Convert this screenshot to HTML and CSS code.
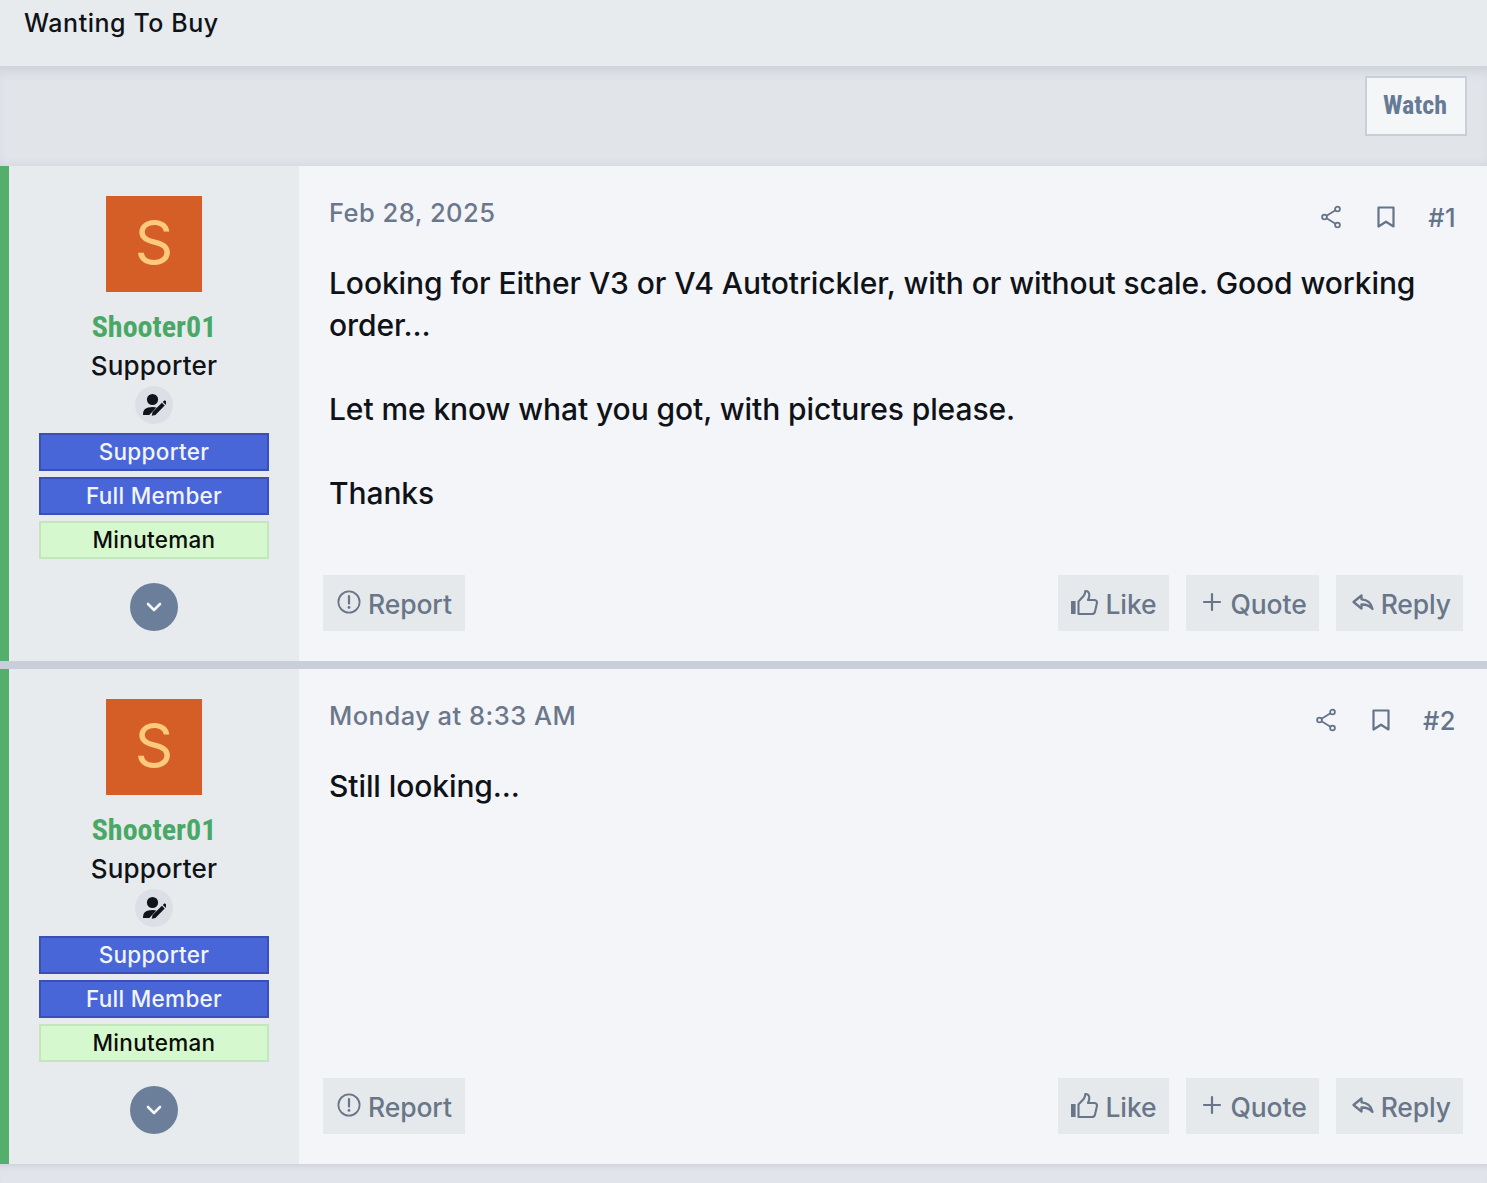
FILE: index.html
```html
<!DOCTYPE html>
<html lang="en">
<head>
<meta charset="utf-8">
<title>Wanting To Buy</title>
<link rel="stylesheet" href="styles.css">
</head>
<body>
<svg class="defs" width="0" height="0" aria-hidden="true">
  <symbol id="i-share" viewBox="0 0 24 24"><g fill="none" stroke="currentColor" stroke-width="1.800"><circle cx="18.500" cy="4" r="2.400"/><circle cx="5.500" cy="12" r="2.400"/><circle cx="18.500" cy="20" r="2.400"/><path d="M7.600 10.700 16.400 5.300M7.600 13.300l8.800 5.400"/></g></symbol>
  <symbol id="i-bookmark" viewBox="0 0 24 24"><path d="M4.500 2.500h15v19l-7.500-4.800-7.500 4.800z" fill="none" stroke="currentColor" stroke-width="2.200" stroke-linejoin="round"/></symbol>
  <symbol id="i-report" viewBox="0 0 24 24"><circle cx="12" cy="12" r="10.600" fill="none" stroke="currentColor" stroke-width="1.800"/><path d="M12 6v7.600" stroke="currentColor" stroke-width="2.200" stroke-linecap="round"/><circle cx="12" cy="17.400" r="1.400" fill="currentColor"/></symbol>
  <symbol id="i-like" viewBox="0 0 28 28"><path d="M1 12h4.600v13H1z" fill="currentColor"/><path d="M8.500 12.500 13.600 7c1-1.200 1.700-2.800 1.700-5 2.600 0 4 1.700 4 4.200 0 1.700-.6 3.300-1.300 4.800h6.300c1.800 0 3 1.500 2.600 3.200l-1.900 8.300c-.3 1.500-1.500 2.500-3 2.500H8.500z" fill="none" stroke="currentColor" stroke-width="2.100" stroke-linejoin="round"/></symbol>
  <symbol id="i-plus" viewBox="0 0 20 20"><path d="M10 2v16M2 10h16" stroke="currentColor" stroke-width="2.200" stroke-linecap="round"/></symbol>
  <symbol id="i-reply" viewBox="0 0 24 24"><path d="M10.500 4.500 2.500 11 10.500 17.500v-4c4.500-.2 8 1 11 4.500-1-5.500-4.500-9.300-11-9.700z" fill="none" stroke="currentColor" stroke-width="2.300" stroke-linejoin="round"/></symbol>
  <symbol id="i-chevron" viewBox="0 0 20 20"><path d="M4 7l6 6 6-6" fill="none" stroke="currentColor" stroke-width="2.600" stroke-linecap="round" stroke-linejoin="round"/></symbol>
  <symbol id="i-author" viewBox="0 0 24 24"><circle cx="10.500" cy="6.500" r="5.600" fill="currentColor"/><path d="M1 22c0-3 .6-5 2.500-6.200C5 14.800 7.500 14 10.500 14c1.500 0 2.800.2 3.900.5L7.300 22z" fill="currentColor"/><path d="M9.700 22.800l.9-3.700 9.300-9.300 2.800 2.800-9.300 9.300zM20.800 8.900l1.200-1.200c.4-.4 1-.4 1.400 0l1.400 1.400c.4.4.4 1 0 1.400l-1.200 1.200z" fill="currentColor"/></symbol>
</svg>

<header class="page-title">Wanting To Buy</header>

<div class="toolbar">
  <a class="watch"><span class="condensed">Watch</span></a>
</div>

<article class="post">
  <aside class="user">
    <div class="avatar">S</div>
    <div class="name"><span class="condensed">Shooter01</span></div>
    <div class="role">Supporter</div>
    <div class="author-badge"><svg class="icon-author"><use href="#i-author"/></svg></div>
    <div class="banner blue">Supporter</div>
    <div class="banner blue">Full Member</div>
    <div class="banner green">Minuteman</div>
    <div class="expand"><svg class="icon-chevron"><use href="#i-chevron"/></svg></div>
  </aside>
  <div class="main">
    <div class="meta">
      <time class="date">Feb 28, 2025</time>
      <div class="meta-actions">
        <svg class="icon-share"><use href="#i-share"/></svg>
        <svg class="icon-bookmark"><use href="#i-bookmark"/></svg>
        <span class="num">#1</span>
      </div>
    </div>
    <div class="body">Looking for Either V3 or V4 Autotrickler, with or without scale. Good working order...<br><br>Let me know what you got, with pictures please.<br><br>Thanks</div>
    <div class="actions">
      <a class="btn btn-report"><svg class="icon-report"><use href="#i-report"/></svg>Report</a>
      <span class="spacer"></span>
      <a class="btn btn-like"><svg class="icon-like"><use href="#i-like"/></svg>Like</a>
      <a class="btn btn-quote"><svg class="icon-plus"><use href="#i-plus"/></svg>Quote</a>
      <a class="btn btn-reply"><svg class="icon-reply"><use href="#i-reply"/></svg>Reply</a>
    </div>
  </div>
</article>

<div class="divider"></div>

<article class="post">
  <aside class="user">
    <div class="avatar">S</div>
    <div class="name"><span class="condensed">Shooter01</span></div>
    <div class="role">Supporter</div>
    <div class="author-badge"><svg class="icon-author"><use href="#i-author"/></svg></div>
    <div class="banner blue">Supporter</div>
    <div class="banner blue">Full Member</div>
    <div class="banner green">Minuteman</div>
    <div class="expand"><svg class="icon-chevron"><use href="#i-chevron"/></svg></div>
  </aside>
  <div class="main">
    <div class="meta">
      <time class="date">Monday at 8:33 AM</time>
      <div class="meta-actions">
        <svg class="icon-share"><use href="#i-share"/></svg>
        <svg class="icon-bookmark"><use href="#i-bookmark"/></svg>
        <span class="num">#2</span>
      </div>
    </div>
    <div class="body">Still looking...</div>
    <div class="actions">
      <a class="btn btn-report"><svg class="icon-report"><use href="#i-report"/></svg>Report</a>
      <span class="spacer"></span>
      <a class="btn btn-like"><svg class="icon-like"><use href="#i-like"/></svg>Like</a>
      <a class="btn btn-quote"><svg class="icon-plus"><use href="#i-plus"/></svg>Quote</a>
      <a class="btn btn-reply"><svg class="icon-reply"><use href="#i-reply"/></svg>Reply</a>
    </div>
  </div>
</article>
<div class="page-end"></div>
</body>
</html>
```
FILE: styles.css
```css
* { box-sizing: border-box; }
html, body { margin: 0; padding: 0; }
body {
  background: #e1e4e9;
  color: #0f1318;
  font-family: Inter, "Liberation Sans", sans-serif;
  overflow: hidden;
  height: 1183px;
}
.defs { position: absolute; }
.page-title {
  height: 66px;
  background: #e8ebee;
  padding: 7px 24px 0;
  font-size: 25px;
  line-height: 32px;
  font-weight: 500;
  letter-spacing: .55px;
}
.toolbar {
  height: 100px;
  padding: 10px 20px 0 0;
  display: flex;
  justify-content: flex-end;
  align-items: flex-start;
  background: #e1e4e9;
  box-shadow: inset 0 10px 12px -6px rgba(100, 110, 130, .18), inset 0 -8px 10px -8px rgba(100, 110, 130, .12);
}
.condensed {
  font-family: "Roboto Condensed", Roboto, sans-serif;
  font-stretch: condensed;
  display: inline-block;
}
.watch {
  width: 102px;
  height: 60px;
  padding: 0 2px 2px 0;
  border: 2px solid #c9cfda;
  background: #f4f6f8;
  color: #667a96;
  font-size: 26px;
  font-weight: 700;
  display: flex;
  align-items: center;
  justify-content: center;
}
.post {
  display: flex;
  height: 495px;
  background: #f4f5f8;
  border-left: 9px solid #53af6b;
}
.user {
  width: 290px;
  flex: none;
  background: #e8ebee;
  padding-top: 30px;
  display: flex;
  flex-direction: column;
  align-items: center;
}
.avatar {
  width: 96px;
  height: 96px;
  background: #d55e27;
  color: #fdc97c;
  font-size: 60px;
  line-height: 92px;
  text-align: center;
  font-weight: 400;
}
.name {
  margin-top: 16px;
  color: #4aa867;
  font-size: 30px;
  line-height: 36px;
  font-weight: 700;
}
.role {
  margin-top: 5px;
  font-size: 26px;
  line-height: 32px;
  font-weight: 500;
  letter-spacing: .2px;
}
.author-badge {
  width: 38px;
  height: 38px;
  margin-top: 4px;
  border-radius: 50%;
  background: #dcdfe5;
  display: flex;
  align-items: center;
  justify-content: center;
  color: #10131a;
}
.icon-author { width: 24px; height: 24px; }
.banner {
  width: 230px;
  height: 38px;
  margin-top: 6px;
  font-size: 22.500px;
  line-height: 34px;
  font-weight: 500;
  letter-spacing: .3px;
  text-align: center;
  border: 2px solid;
}
.author-badge + .banner { margin-top: 9px; }
.banner.blue { background: #4966d9; border-color: #3a50b8; color: #f1f4fb; }
.banner.green { background: #d6f8cf; border-color: #c3e6bf; color: #0a0d0a; }
.expand {
  width: 48px;
  height: 48px;
  margin-top: 24px;
  border-radius: 50%;
  background: #6b7f9b;
  color: #f4f6f8;
  display: flex;
  align-items: center;
  justify-content: center;
}
.icon-chevron { width: 20px; height: 20px; }
.main {
  flex: 1;
  min-width: 0;
  display: flex;
  flex-direction: column;
  padding: 0 24px 30px;
}
.meta {
  display: flex;
  justify-content: space-between;
  align-items: flex-start;
  padding: 29px 7px 0 6px;
}
.date {
  font-size: 25.500px;
  line-height: 36px;
  font-weight: 500;
  letter-spacing: .47px;
  color: #6b788c;
}
.meta-actions {
  display: flex;
  align-items: center;
  color: #64748b;
  margin-top: 4px;
  height: 36px;
}
.icon-share { width: 24px; height: 24px; margin-right: 31px; }
.icon-bookmark { width: 24px; height: 24px; margin-right: 30px; }
.num { font-size: 25.500px; font-weight: 500; letter-spacing: .5px; }
.body {
  flex: 1;
  padding: 27px 7px 0 6px;
  font-size: 30px;
  line-height: 42px;
  font-weight: 500;
  letter-spacing: -.09px;
}
.actions {
  display: flex;
  height: 56px;
  gap: 17px;
}
.spacer { flex: 1; }
.btn {
  display: flex;
  align-items: center;
  height: 56px;
  padding: 2px 12px 0 14px;
  background: #e6e9ec;
  color: #697689;
  font-size: 26.500px;
  font-weight: 500;
  letter-spacing: -.1px;
}
.btn-report { padding-right: 13px; }
.icon-report { width: 24px; height: 24px; margin-right: 7px; margin-top: -5px; }
.icon-like { width: 28px; height: 28px; margin-right: 7px; margin-top: -3px; }
.btn-like { padding-left: 12px; }
.icon-plus { width: 20px; height: 20px; margin-right: 9px; margin-top: -5px; }
.btn-quote { padding-left: 16px; }
.btn-reply { padding-left: 15px; }
.icon-reply { width: 24px; height: 24px; margin-right: 6px; margin-top: -2px; }
.divider { height: 8px; background: #c8cfda; }
.page-end { height: 19px; background: #e1e4e9; box-shadow: inset 0 6px 6px -5px rgba(100, 110, 130, .2); }
```
